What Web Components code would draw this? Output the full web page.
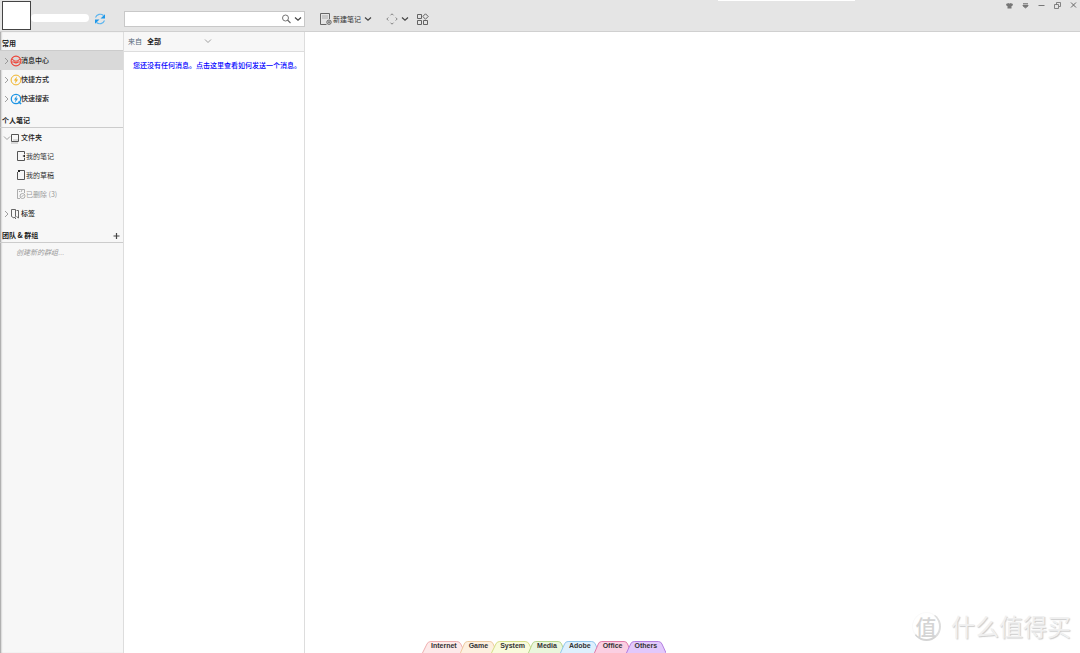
<!DOCTYPE html>
<html lang="zh-CN">
<head>
<meta charset="utf-8">
<title>笔记</title>
<style>
html, body { margin: 0; height: 100%; }
body { font: 7px/12px "Noto Sans CJK SC", "Liberation Sans", sans-serif; color: #222; background: #fff; overflow: hidden; }
</style>
</head>
<body>
<note-app></note-app>
<script>
const ICONS = {
  sync: '<g fill="none" stroke="#5cb5ef" stroke-width="1.1"><path d="M1.500 4.500A5 5 0 0 1 9.500 2.500M10.500 7.500A5 5 0 0 1 2.500 9.500"/></g><path d="M11 1.200V5.500H6.500ZM1 10.800V6.500H5.500Z" fill="#1e98ea"/>',
  search: '<circle cx="5.500" cy="5" r="3" fill="none" stroke="#666" stroke-width=".9"/><path d="M7.500 7L10.500 10" stroke="#666" stroke-width="1.100"/>',
  down: '<path d="M3 4.500L6 7.300L9 4.500" fill="none" stroke="#444" stroke-width="1.200"/>',
  downlight: '<path d="M3 4.500L6 7.500L9 4.500" fill="none" stroke="#888" stroke-width=".8"/>',
  right: '<path d="M4 3L7 6L4 9" fill="none" stroke="#888" stroke-width=".8"/>',
  newnote: '<g fill="none" stroke="#666"><path d="M6.500 11.500H.5V.5H9.500V6"/><path d="M2 3H8M2 5H8" stroke="#aaa"/><circle cx="9" cy="9.200" r="2.200"/></g><path d="M7.800 9.200h2.400M9 8v2.400" stroke="#555" stroke-width=".7"/>',
  move: '<g fill="none" stroke="#777" stroke-width=".9"><path d="M4.500 2.300L6 .8L7.500 2.300M9.700 4.500L11.200 6L9.700 7.500M7.500 9.700L6 11.200L4.500 9.700M2.300 7.500L.8 6L2.300 4.500"/></g>',
  apps: '<g fill="none" stroke="#555" stroke-width=".9"><path d="M.5 1.500h4v4h-4zM.5 7.500h4v4h-4zM6.500 7.500h4v4h-4zM8.500 .8L11.200 3.500L8.500 6.200L5.800 3.500Z"/></g>',
  message: '<g fill="none" stroke="#ed4439" stroke-width="1.100"><circle cx="6" cy="6" r="4.900"/><path d="M2 4Q4 6.300 6 6.300T10 4M1.500 7H4Q6 8.800 8 7H10.500"/></g>',
  shortcut: '<circle cx="6" cy="6" r="4.900" fill="none" stroke="#f0b429"/><path d="M7 2.500L3.800 6.500H5.600L5 9.500L8.200 5.500H6.300Z" fill="#f0b429"/>',
  quick: '<circle cx="6" cy="6" r="4.700" fill="none" stroke="#1c94e4" stroke-width="1.300"/><path d="M7 2.500L4 6.500H5.600L5 9.500L8 5.500H6.300Z" fill="#1c94e4"/><path d="M8.500 8.500L11 11" stroke="#1c94e4" stroke-width="1.700"/>',
  folder: '<path d="M1.500 2.500H8.500V9.500H1.500Z" fill="none" stroke="#555"/><path d="M3 8H8M1 11H8" stroke="#aaa" stroke-width=".8"/>',
  note: '<path d="M9.500 4V1.500H2.500V10.500H9.500V8" fill="none" stroke="#555"/><path d="M7.500 6L10 4.500V7.500Z" fill="#222"/>',
  draft: '<path d="M5 1.500H9.500V10.500H2.500V3" fill="none" stroke="#555"/><path d="M3 1h2v2h-2z" fill="#222"/>',
  trash: '<g fill="none" stroke="#999" stroke-width=".8"><path d="M5 10.500H2.500V1.500H9.500V5M4 3l1 1M7 2l-1 2"/><circle cx="7.500" cy="8" r="2.500"/><path d="M6.500 9l2-2"/></g>',
  tag: '<g fill="none" stroke="#555" stroke-width=".9"><path d="M1.500 1.500H5.500V8.500L4 10L1.500 8.500ZM6.500 2.500H8.500V10L6.500 8.500M5.500 9.500V11"/></g>',
  plus: '<path d="M5.500 4V10M2.500 7H8.500" stroke="#444" stroke-width="1.200"/>',
  shirt: '<path d="M2 4L4.500 3Q5.500 4.200 6.500 3L9 4L8.300 6H7.500V8.500H3.500V6H2.700Z" fill="#777"/>',
  tray: '<path d="M3 3.500H8M3 5H8V6L5.500 8L3 6Z" stroke="#777" stroke-width=".8" fill="#777"/>',
  min: '<path d="M2.500 5.500H8.500" stroke="#777"/>',
  restore: '<path d="M4.500 5V2.500H8.500V6.500H7M2.500 4.500H6.500V8.500H2.500Z" fill="none" stroke="#777" stroke-width=".9"/>',
  close: '<path d="M3 2.500L8 7.500M8 2.500L3 7.500" stroke="#666" stroke-width="1"/>'
};
const RESET = '*{box-sizing:border-box}button,input,select{font:inherit;color:inherit;margin:0;padding:0;border:0;background:none;border-radius:0;outline:0}button{display:flex;align-items:center;cursor:pointer}';

class Base extends HTMLElement {
  connectedCallback() {
    if (this.shadowRoot) return;
    const t = document.createElement('template');
    t.innerHTML = `<style>${RESET}${this.css()}</style>${this.html()}`;
    this.attachShadow({ mode: 'open' }).append(t.content.cloneNode(true));
  }
}

customElements.define('note-icon', class extends Base {
  css() { return ':host{display:block;flex:none;width:12px;height:12px}svg{display:block;width:100%;height:100%}'; }
  html() { return `<svg viewBox="0 0 12 12" aria-hidden="true">${ICONS[this.getAttribute('name')]}</svg>`; }
});

customElements.define('tree-section', class extends Base {
  css() { return ':host{display:block}h2{display:flex;align-items:center;justify-content:space-between;margin:0;padding:4px 0 0 2px;height:20px;border-bottom:1px solid #ccc;font-size:7px;line-height:12px;font-weight:700;color:#222}'; }
  html() { return `<h2>${this.getAttribute('heading')}<slot name="action"></slot></h2><slot></slot>`; }
});

customElements.define('tree-item', class extends Base {
  css() { return `:host{display:block}
    button{width:100%;height:19px;padding-left:1px;font-weight:500;color:#222;white-space:pre}
    .arrow{margin-right:-3px}
    :host([child]) button{padding-left:15px;padding-bottom:1px;font-weight:400;color:#333}
    :host([muted]) button{color:#999}
    :host([selected]) button{background:#d9d9d9}
    .label{margin:-1px 0 0 -1px}`; }
  html() {
    const arrow = this.getAttribute('arrow');
    return `<button type="button">${arrow ? `<note-icon class="arrow" name="${arrow}"></note-icon>` : ''}<note-icon name="${this.getAttribute('icon')}"></note-icon><span class="label"><slot></slot></span></button>`;
  }
});

customElements.define('note-sidebar', class extends Base {
  css() { return `:host{display:block;background:#f7f7f7;border-right:1px solid #ddd;box-shadow:inset 2px 0 2px -1px #999}
    nav{margin-top:-1px}
    .new{padding:3px 0 3px 16px;font-style:italic;color:#999}`; }
  html() { return `<nav aria-label="笔记导航">
    <tree-section heading="常用">
      <tree-item arrow="right" icon="message" selected>消息中心</tree-item>
      <tree-item arrow="right" icon="shortcut">快捷方式</tree-item>
      <tree-item arrow="right" icon="quick">快速搜索</tree-item>
    </tree-section>
    <tree-section heading="个人笔记">
      <tree-item arrow="downlight" icon="folder">文件夹</tree-item>
      <tree-item child icon="note">我的笔记</tree-item>
      <tree-item child icon="draft">我的草稿</tree-item>
      <tree-item child muted icon="trash">已删除 (3)</tree-item>
      <tree-item arrow="right" icon="tag">标签</tree-item>
    </tree-section>
    <tree-section heading="团队 &amp; 群组">
      <button slot="action" type="button" aria-label="添加"><note-icon name="plus"></note-icon></button>
      <button class="new" type="button">创建新的群组...</button>
    </tree-section></nav>`; }
});

customElements.define('note-toolbar', class extends Base {
  css() { return `:host{display:grid;grid-template-columns:124px 181px 1fr;height:32px;background:#e5e5e5;border-bottom:1px solid #d0d0d0}
    .user{display:flex;align-items:center;padding-left:2px}
    .avatar{width:29px;height:29px;background:#fff;border:1px solid #444}
    .name{width:58px;height:8px;border-radius:4px;background:#fff;margin-right:5px;margin-top:4px}
    .user button{margin-top:6px}
    .search{display:flex;align-items:center;height:16px;margin-top:11px;background:#fff;border:1px solid #c8c8c8}
    input{flex:1;min-width:0;height:100%;padding:0 4px}
    .tools{display:flex;align-items:center;padding:7px 0 0 15px;color:#333}
    .tools .apps{margin-left:6px}
    .tools .move{margin-left:12px}
    .move{gap:1px}
    .tools .note{gap:1px}
    .tab{align-self:start;margin:-7px 0 0 auto;width:137px;height:1px;background:#fff}
    .win{display:flex;align-self:start;gap:4px;margin:-7px 0 0 149px}`; }
  html() { return `<div class="user"><div class="avatar"></div><div class="name"></div><button type="button" aria-label="同步"><note-icon name="sync"></note-icon></button></div>
    <div class="search"><input type="search" aria-label="搜索"><button type="button" aria-label="搜索"><note-icon name="search"></note-icon></button><button type="button" aria-label="搜索选项"><note-icon name="down"></note-icon></button></div>
    <div class="tools"><button class="note" type="button"><note-icon name="newnote"></note-icon>新建笔记<note-icon name="down"></note-icon></button>
      <button class="move" type="button" aria-label="移动"><note-icon name="move"></note-icon><note-icon name="down"></note-icon></button>
      <button class="apps" type="button" aria-label="应用"><note-icon name="apps"></note-icon></button>
      <div class="tab"></div>
      <div class="win">${[['shirt','皮肤'],['tray','菜单'],['min','最小化'],['restore','还原'],['close','关闭']].map(([n, l]) => `<button type="button" aria-label="${l}"><note-icon name="${n}"></note-icon></button>`).join('')}</div></div>`; }
});

customElements.define('message-list', class extends Base {
  css() { return `:host{display:block;border-right:1px solid #ddd;background:#fff}
    .filter{display:flex;align-items:center;height:20px;padding-left:4px;padding-bottom:1px;background:#f7f7f7;border-bottom:1px solid #ddd}
    label{color:#567;margin-right:5px}
    select{appearance:none;width:55px;height:14px;font-weight:700;color:#222}
    a{display:block;padding:7px 0 0 9px;font-weight:500;color:#00f;text-decoration:none;white-space:nowrap}`; }
  html() { return `<div class="filter"><label for="from">来自</label><select id="from"><option>全部</option></select><note-icon name="downlight"></note-icon></div>
    <a href="#help">您还没有任何消息。点击这里查看如何发送一个消息。</a>`; }
});

customElements.define('dock-tab', class extends Base {
  css() { return `:host{display:block;position:relative}
    svg{position:absolute;inset:0 auto auto -3px;width:calc(100% + 6px);height:12px}
    button{position:relative;height:12px;padding:0 6px;font:700 7px/10px "Liberation Sans",sans-serif;color:#333;align-items:flex-start}`; }
  html() { return `<svg viewBox="0 0 44 12" preserveAspectRatio="none" aria-hidden="true"><path d="M.5 12L5 3Q6 .5 9 .5H35Q38 .5 39 3L43.500 12" fill="${this.getAttribute('fill')}" stroke="${this.getAttribute('edge')}"/></svg><button type="button"><slot></slot></button>`; }
});

customElements.define('tab-dock', class extends Base {
  css() { return ':host{display:flex}'; }
  html() { return [['Internet','#fdeaea','#efb0b0'],['Game','#fdf0e0','#edc79a'],['System','#f9fbdc','#d5dd84'],['Media','#eaf6dc','#b2d487'],['Adobe','#def0fd','#8cc4ec'],['Office','#fbcfe2','#e074a4'],['Others','#e2c8fb','#b07be0']]
    .map(([t, f, e]) => `<dock-tab fill="${f}" edge="${e}">${t}</dock-tab>`).join(''); }
});

customElements.define('brand-mark', class extends Base {
  css() { return `:host{display:flex;align-items:center;gap:10px;color:#f0f0f0;text-shadow:1px 1px 1px #ccc;font-size:24px;line-height:32px}
    .seal{display:grid;place-items:center;width:29px;height:29px;border-radius:50%;border:1px solid #fafafa;border-right:2px solid #ddd;border-bottom:2px solid #d4d4d4;color:#d4d4d4;text-shadow:none;font-size:21px;line-height:24px;font-weight:500}`; }
  html() { return '<span class="seal">值</span><span>什么值得买</span>'; }
});

customElements.define('note-app', class extends Base {
  css() { return `:host{display:grid;grid-template-rows:auto 1fr;min-height:100vh;position:relative}
    .body{display:grid;grid-template-columns:124px 181px 1fr}
    tab-dock{position:absolute;bottom:0;left:50%;margin-left:-115px}
    brand-mark{position:absolute;right:9px;bottom:11px}`; }
  html() { return '<note-toolbar></note-toolbar><div class="body"><note-sidebar></note-sidebar><message-list></message-list><main></main></div><tab-dock></tab-dock><brand-mark></brand-mark>'; }
});
</script>
</body>
</html>
